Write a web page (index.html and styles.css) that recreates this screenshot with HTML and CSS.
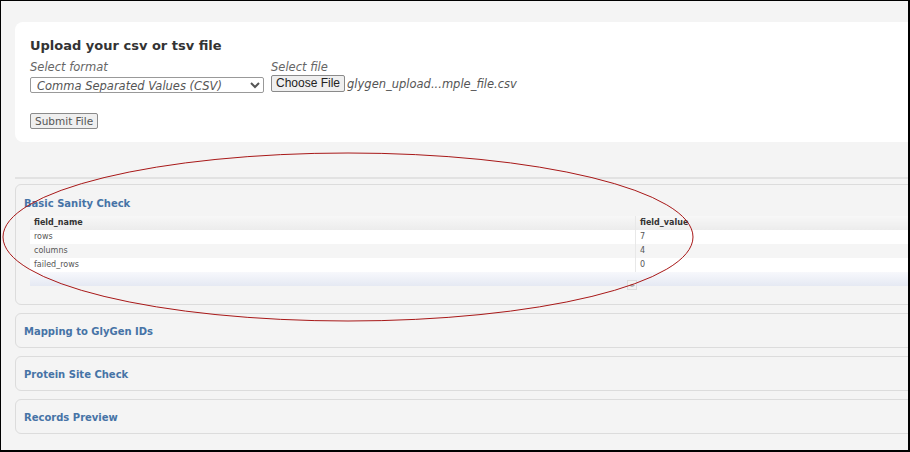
FILE: index.html
```html
<!DOCTYPE html>
<html lang="en">
  <head>
    <meta charset="UTF-8" />
    <title>Upload</title>
    <link rel="stylesheet" href="styles.css">
  </head>
  <body>
    <div class="frame">
      <div class="page">
        <div class="upload-card">
          <h2>Upload your csv or tsv file</h2>
          <div class="form-row">
            <div class="field">
              <label>Select format</label>
              <select class="format">
                <option>Comma Separated Values (CSV)</option>
              </select>
            </div>
            <div class="field">
              <label>Select file</label>
              <div class="file-pick">
                <button class="btn choose">Choose File</button>
                <span class="file-name">glygen_upload...mple_file.csv</span>
              </div>
            </div>
          </div>
          <button class="btn submit">Submit File</button>
        </div>

        <div class="divider"></div>

        <div class="panel">
          <div class="panel-title">Basic Sanity Check</div>
          <div class="grid-wrap">
            <table class="sanity">
              <thead>
                <tr><th class="c1">field_name</th><th>field_value</th></tr>
              </thead>
              <tbody>
                <tr><td class="c1">rows</td><td>7</td></tr>
                <tr class="alt"><td class="c1">columns</td><td>4</td></tr>
                <tr><td class="c1">failed_rows</td><td>0</td></tr>
              </tbody>
            </table>
            <div class="hscroll"><span class="arrows">◂▸</span></div>
          </div>
        </div>

        <div class="panel small"><div class="panel-title">Mapping to GlyGen IDs</div></div>
        <div class="panel small"><div class="panel-title">Protein Site Check</div></div>
        <div class="panel small"><div class="panel-title">Records Preview</div></div>
      </div>

      <svg class="mark" width="910" height="452" viewBox="0 0 910 452">
        <ellipse cx="347" cy="236" rx="345" ry="84" fill="none" stroke="#a81818" stroke-width="1"/>
      </svg>
    </div>
  </body>
</html>
```

FILE: styles.css
```css
body {
  margin: 0;
  background: #fff;
}
.frame {
  position: relative;
  width: 910px;
  height: 452px;
  box-sizing: border-box;
  border: 1px solid #000;
  border-right-width: 2px;
  border-bottom-width: 2px;
  overflow: hidden;
  background: #f4f4f4;
  font-family: "DejaVu Sans", Verdana, sans-serif;
}
.page {
  width: 960px;
  padding: 21px 0 0 14px;
}

/* upload card */
.upload-card {
  background: #fff;
  border-radius: 8px;
  padding: 16px 15px 13px;
}
.upload-card h2 {
  margin: 0 0 7px;
  font-size: 13px;
  line-height: 16px;
  font-weight: bold;
  color: #333;
}
.form-row {
  display: flex;
  gap: 7px;
}
.field label {
  display: block;
  font-size: 11.5px;
  line-height: 13px;
  font-style: italic;
  color: #666;
  margin-bottom: 1px;
}
.format {
  width: 234px;
  height: 16px;
  font-family: "DejaVu Sans", sans-serif;
  font-size: 11.5px;
  font-style: italic;
  color: #555;
  border: 1px solid #999;
  border-radius: 2px;
  background: #fff;
  padding: 0 2px;
  margin-top: 1px;
}
.file-pick {
  display: flex;
  align-items: center;
  gap: 2px;
}
.btn {
  height: 17px;
  padding: 0 5px;
  background: #efefef;
  border: 1px solid #8a8a8a;
  border-radius: 2px;
  color: #222;
  font-size: 11.5px;
  line-height: 15px;
}
.choose {
  font-family: "Liberation Sans", Arial, sans-serif;
  font-size: 12px;
  padding: 0 4px;
}
.file-name {
  font-size: 11.5px;
  font-style: italic;
  color: #555;
}
.submit {
  margin-top: 19px;
  height: 16px;
  line-height: 14px;
  font-family: "DejaVu Sans", sans-serif;
  font-size: 10.5px;
  color: #555;
  padding: 0 4px;
}

.divider {
  height: 2px;
  background: #e2e2e2;
  margin-top: 35px;
}

/* panels */
.panel {
  margin-top: 5px;
  border: 1px solid #dcdcdc;
  border-radius: 6px;
  background: #f4f4f4;
  padding: 12px 0 18px 8px;
}
.panel.small {
  margin-top: 8px;
  padding: 11px 0 9px 8px;
}
.panel-title {
  font-size: 10px;
  line-height: 13px;
  font-weight: bold;
  color: #4673a6;
}
.grid-wrap {
  margin: 6px 0 0 6px;
}
.sanity {
  width: 100%;
  border-collapse: collapse;
  font-size: 8px;
  color: #555;
}
.sanity th,
.sanity td {
  height: 14px;
  padding: 0 4px;
  text-align: left;
  line-height: 14px;
}
.sanity th {
  color: #333;
  font-weight: bold;
  background: linear-gradient(#f7f7f7, #ececec);
}
.sanity .c1 {
  width: 597px;
  border-right: 1px solid #e8e8e8;
}
.sanity tbody tr {
  background: #fff;
}
.sanity tbody tr.alt {
  background: #f5f5f5;
}
.hscroll {
  height: 14px;
  background: linear-gradient(#f7f8fc, #e5e9f3);
  padding-left: 597px;
}
.arrows {
  display: inline-block;
  margin-top: 4px;
  font-size: 6px;
  line-height: 8px;
  color: #aaa;
  border: 1px solid #ddd;
  padding: 0 1px;
  background: #f2f2f2;
}

.mark {
  position: absolute;
  left: 0;
  top: 0;
  pointer-events: none;
}
```
